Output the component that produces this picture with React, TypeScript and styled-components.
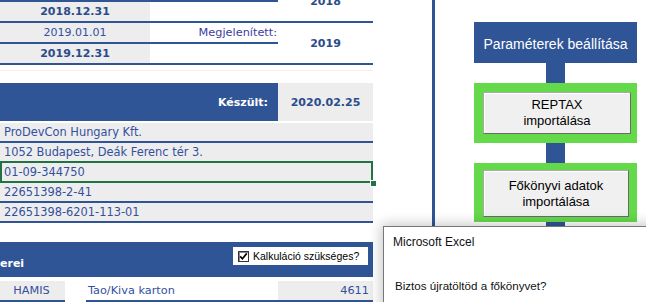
import React from "react";
import styled, { createGlobalStyle } from "styled-components";

const BLUE = "#2F5597";
const GRAY = "#EDEDED";
const TEXT = "#3350A0";
const BOLDTEXT = "#2B4C8C";

const Global = createGlobalStyle`
  html, body { margin: 0; padding: 0; background: #fff; }
  body { width: 646px; height: 302px; overflow: hidden; }
  #root { width: 646px; height: 302px; overflow: hidden; }
  * { box-sizing: border-box; }
`;

const Screen = styled.div`
  position: relative;
  display: flex;
  width: 646px;
  height: 302px;
  overflow: hidden;
  background: #fff;
  font-family: "DejaVu Sans", Verdana, sans-serif;
  font-size: 11px;
`;

const Sheet = styled.div`
  width: 432px;
  flex: none;
  display: flex;
  flex-direction: column;
`;

const Divider = styled.div`
  width: 3px;
  flex: none;
  background: ${BLUE};
`;

const Panel = styled.div`
  flex: 1;
  display: flex;
  flex-direction: column;
  align-items: flex-start;
  padding: 22px 0 0 39px;
  font-family: "Liberation Sans", Arial, sans-serif;
`;

/* ---------- period table ---------- */
const PeriodGrid = styled.div`
  margin-top: -19px;
  width: 373px;
  display: grid;
  grid-template-columns: 150px 128px 95px;
  grid-template-rows: repeat(4, 21px);
`;

const DateCell = styled.div<{ $bold?: boolean }>`
  background: ${GRAY};
  border-bottom: 2px solid ${BLUE};
  display: flex;
  align-items: center;
  justify-content: center;
  color: ${(p) => (p.$bold ? BOLDTEXT : TEXT)};
  font-weight: ${(p) => (p.$bold ? 700 : 400)};
`;

const LabelCell = styled.div`
  border-bottom: 2px solid ${BLUE};
  display: flex;
  align-items: center;
  justify-content: flex-end;
  padding-right: 1px;
  color: #3B3D9F;
  font-size: 11.3px;
`;

const YearCell = styled.div`
  grid-row: span 2;
  border-bottom: 2px solid ${BLUE};
  display: flex;
  align-items: center;
  justify-content: center;
  color: ${BOLDTEXT};
  font-weight: 700;
`;

const FaintRule = styled.div`
  width: 373px;
  height: 6px;
  border-bottom: 1px solid #F4EDE9;
`;

const Gap = styled.div<{ $h: number }>`
  height: ${(p) => p.$h}px;
  flex: none;
`;

/* ---------- stamp band ---------- */
const StampRow = styled.div`
  width: 373px;
  height: 38px;
  display: grid;
  grid-template-columns: 278px 95px;
`;

const StampLabel = styled.div`
  background: ${BLUE};
  color: #fff;
  font-weight: 700;
  display: flex;
  align-items: center;
  justify-content: flex-end;
  padding-right: 10px;
`;

const StampValue = styled.div`
  background: ${GRAY};
  color: ${BOLDTEXT};
  font-weight: 700;
  display: flex;
  align-items: center;
  justify-content: center;
`;

/* ---------- data rows ---------- */
const DataRow = styled.div<{ $selected?: boolean }>`
  position: relative;
  width: 373px;
  height: 20px;
  background: ${GRAY};
  border-bottom: 2px solid ${BLUE};
  display: flex;
  align-items: center;
  padding-left: 4px;
  color: ${TEXT};
  font-size: 11.4px;
  ${(p) =>
    p.$selected &&
    `
    &::after {
      content: "";
      position: absolute;
      top: -2px;
      bottom: -2px;
      left: 0;
      right: 0;
      border: 2px solid #217346;
    }
    &::before {
      content: "";
      position: absolute;
      right: -3px;
      bottom: -5px;
      width: 5px;
      height: 5px;
      background: #217346;
      box-shadow: 0 0 0 1px #fff;
      z-index: 1;
    }
  `}
`;

/* ---------- second band ---------- */
const SectionBand = styled.div`
  width: 373px;
  height: 35px;
  background: ${BLUE};
  display: flex;
  justify-content: space-between;
  align-items: flex-start;
`;

const BandTitle = styled.div`
  color: #fff;
  font-weight: 700;
  line-height: 14px;
  padding-top: 15px;
`;

const CheckField = styled.label`
  margin: 5px 5px 0 0;
  width: 135px;
  height: 18px;
  background: #fff;
  display: flex;
  align-items: center;
  gap: 4px;
  padding-left: 5px;
  font-family: "Liberation Sans", Arial, sans-serif;
  font-size: 10.5px;
  color: #000;
`;

const CheckBox = styled.span`
  width: 11px;
  height: 11px;
  flex: none;
  border: 1px solid #333;
  box-shadow: inset 1px 1px 0 #8a8a8a;
  background: #fff;
  display: flex;
  align-items: center;
  justify-content: center;
`;

/* ---------- bottom row ---------- */
const AccountRow = styled.div`
  width: 373px;
  height: 21px;
  display: grid;
  grid-template-columns: 65px 21px 192px 95px;
  color: ${TEXT};
  font-size: 11.3px;
`;

const AccCell = styled.div<{ $gray?: boolean; $align?: string; $line?: boolean }>`
  background: ${(p) => (p.$gray ? GRAY : "transparent")};
  border-bottom: ${(p) => (p.$line === false ? "none" : `2px solid ${BLUE}`)};
  display: flex;
  align-items: center;
  justify-content: ${(p) => p.$align || "flex-start"};
  padding: 0 4px 0 2px;
`;

/* ---------- right panel ---------- */
const ParamBox = styled.div`
  width: 163px;
  height: 41px;
  background: ${BLUE};
  color: #fff;
  font-size: 14px;
  display: flex;
  align-items: center;
  justify-content: center;
  padding-top: 2px;
`;

const Connector = styled.div`
  width: 19px;
  height: 20px;
  margin-left: 72px;
  background: ${BLUE};
  flex: none;
`;

const GreenFrame = styled.div<{ $h: number; $pad: string }>`
  width: 163px;
  height: ${(p) => p.$h}px;
  background: #64D94A;
  padding: ${(p) => p.$pad};
  display: flex;
  flex: none;
`;

const ImportButton = styled.button`
  flex: 1;
  margin: 0;
  background: #F0F0F0;
  border: 1px solid #a9a9a9;
  border-right-color: #6a6a6a;
  border-bottom-color: #6a6a6a;
  box-shadow: inset 1px 1px 0 #fff;
  font-family: "Liberation Sans", Arial, sans-serif;
  font-size: 13px;
  line-height: 16px;
  color: #000;
  display: flex;
  flex-direction: column;
  align-items: center;
  justify-content: center;
  padding: 0;
`;

/* ---------- dialog ---------- */
const Dialog = styled.div`
  position: absolute;
  left: 383px;
  top: 226px;
  width: 300px;
  height: 120px;
  background: #fff;
  border: 1px solid #777;
  box-shadow: 0 0 12px 2px rgba(0, 0, 0, 0.22);
  padding: 7px 0 0 9px;
  font-family: "Liberation Sans", Arial, sans-serif;
  font-size: 12px;
  line-height: 16px;
  color: #111;
`;

const DialogTitle = styled.div``;

const DialogMessage = styled.div`
  margin-top: 28px;
  padding-left: 2px;
  font-size: 11.6px;
`;

export default function App() {
  return (
    <>
      <Global />
      <Screen>
        <Sheet>
          <PeriodGrid>
            <DateCell />
            <LabelCell />
            <YearCell>2018</YearCell>
            <DateCell $bold>2018.12.31</DateCell>
            <LabelCell />
            <DateCell>2019.01.01</DateCell>
            <LabelCell>Megjelenített:</LabelCell>
            <YearCell>2019</YearCell>
            <DateCell $bold>2019.12.31</DateCell>
            <LabelCell />
          </PeriodGrid>
          <FaintRule />
          <Gap $h={12} />
          <StampRow>
            <StampLabel>Készült:</StampLabel>
            <StampValue>2020.02.25</StampValue>
          </StampRow>
          <Gap $h={2} />
          <DataRow>ProDevCon Hungary Kft.</DataRow>
          <DataRow>1052 Budapest, Deák Ferenc tér 3.</DataRow>
          <DataRow $selected>01-09-344750</DataRow>
          <DataRow>22651398-2-41</DataRow>
          <DataRow>22651398-6201-113-01</DataRow>
          <Gap $h={19} />
          <SectionBand>
            <BandTitle>erei</BandTitle>
            <CheckField>
              <CheckBox>
                <svg width="9" height="9" viewBox="0 0 9 9">
                  <polyline points="1.2,4.4 3.4,6.8 7.8,1.4" fill="none" stroke="#000" strokeWidth="1.7" />
                </svg>
              </CheckBox>
              Kalkuláció szükséges?
            </CheckField>
          </SectionBand>
          <Gap $h={4} />
          <AccountRow>
            <AccCell $gray $align="center">HAMIS</AccCell>
            <AccCell $line={false} />
            <AccCell>Tao/Kiva karton</AccCell>
            <AccCell $gray $align="flex-end">4611</AccCell>
          </AccountRow>
        </Sheet>
        <Divider />
        <Panel>
          <ParamBox>Paraméterek beállítása</ParamBox>
          <Connector />
          <GreenFrame $h={60} $pad="9px 6px 9px 9px">
            <ImportButton>
              <span>REPTAX</span>
              <span>importálása</span>
            </ImportButton>
          </GreenFrame>
          <Connector />
          <GreenFrame $h={59} $pad="7px 8px 5px 9px">
            <ImportButton>
              <span>Főkönyvi adatok</span>
              <span>importálása</span>
            </ImportButton>
          </GreenFrame>
          <Connector />
        </Panel>
        <Dialog>
          <DialogTitle>Microsoft Excel</DialogTitle>
          <DialogMessage>Biztos újratöltöd a főkönyvet?</DialogMessage>
        </Dialog>
      </Screen>
    </>
  );
}
